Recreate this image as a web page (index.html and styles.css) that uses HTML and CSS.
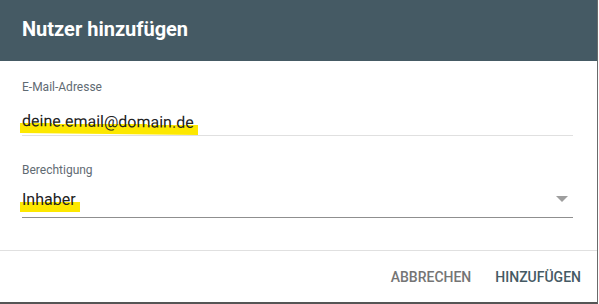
FILE: index.html
```html
<!DOCTYPE html>
<html lang="de">
<head>
    <meta charset="UTF-8">
    <meta name="viewport" content="width=device-width, initial-scale=1.0">
    <title>Nutzer hinzufügen</title>
    <link rel="stylesheet" href="styles.css">
</head>
<body>
    <div class="dialog">
        <div class="dialog-header">Nutzer hinzufügen</div>
        <div class="dialog-body">
            <div class="field">
                <label class="field-label">E-Mail-Adresse</label>
                <div class="field-input email">
                    <span class="marker">deine.email@domain.de</span>
                </div>
            </div>
            <div class="field">
                <label class="field-label">Berechtigung</label>
                <div class="field-input select">
                    <span class="marker">Inhaber</span>
                    <span class="arrow"></span>
                </div>
            </div>
        </div>
        <div class="dialog-actions">
            <button class="btn cancel">Abbrechen</button>
            <button class="btn confirm">Hinzufügen</button>
        </div>
    </div>
</body>
</html>
```

FILE: styles.css
```css
body {
    margin: 0;
    font-family: Roboto, "Liberation Sans", Arial, sans-serif;
    background-color: #fff;
}
.dialog {
    width: 597px;
    height: 302px;
    background-color: #fff;
    border-right: 1px solid #6b6b6b;
    border-bottom: 2px solid #555;
    display: flex;
    flex-direction: column;
}
.dialog-header {
    height: 61px;
    background-color: #455a64;
    color: #fff;
    font-size: 20px;
    font-weight: 700;
    padding-left: 22px;
    line-height: 58px;
}
.dialog-body {
    padding: 18px 24px 0 22px;
    height: 171px;
    border-bottom: 1px solid #e0e0e0;
}
.field {
    display: flex;
    flex-direction: column;
}
.field + .field {
    margin-top: 26px;
}
.field-label {
    font-size: 12px;
    color: #5f6b73;
    line-height: 16px;
}
.field-input {
    position: relative;
    font-size: 16px;
    color: #212121;
    border-bottom: 1px solid #e0e0e0;
}
.email {
    margin-top: 17px;
    height: 23px;
}
.select {
    margin-top: 12px;
    height: 27px;
    border-bottom-color: #8f8f8f;
}
.marker {
    display: inline-block;
    line-height: 20px;
    padding: 0 4px 2px 0;
    margin-left: -2px;
    padding-left: 2px;
    background: linear-gradient(to bottom, transparent 55%, #fde800 55%, #fde800 100%);
}
.email .marker {
    transform: skewY(0.6deg);
}
.arrow {
    position: absolute;
    right: 5px;
    top: 6px;
    width: 0;
    height: 0;
    border-left: 6px solid transparent;
    border-right: 6px solid transparent;
    border-top: 6px solid #9e9e9e;
}
.dialog-actions {
    flex: 1;
    display: flex;
    justify-content: flex-end;
    align-items: center;
    padding-right: 8px;
    gap: 2px;
}
.btn {
    background: none;
    border: none;
    font-family: inherit;
    font-size: 14px;
    font-weight: 500;
    text-transform: uppercase;
    padding: 6px 8px;
    margin-top: 0;
    cursor: pointer;
}
.cancel {
    color: #757575;
    margin-right: 6px;
}
.confirm {
    color: #455a64;
}
```
